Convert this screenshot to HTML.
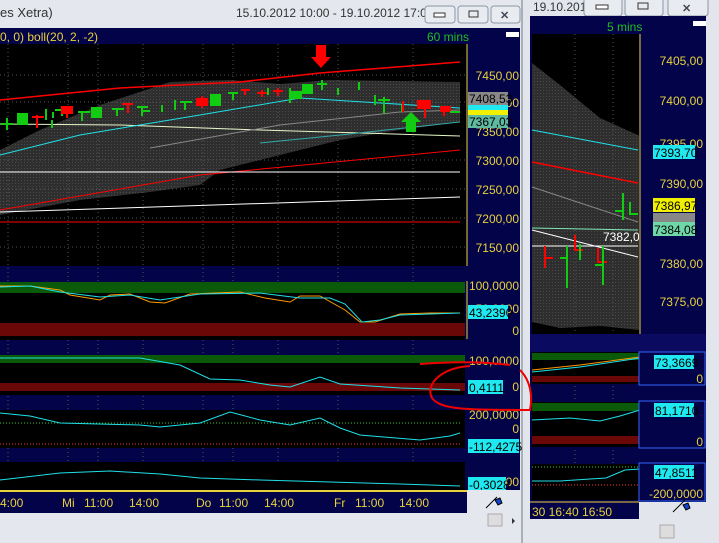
<!DOCTYPE html>
<html><head><meta charset="utf-8"><style>
html,body{margin:0;padding:0;width:719px;height:543px;overflow:hidden;background:#dfe3e8;font-family:"Liberation Sans",sans-serif}
svg{display:block}
text{font-family:"Liberation Sans",sans-serif}
</style></head><body>
<svg width="719" height="543" viewBox="0 0 719 543" xmlns="http://www.w3.org/2000/svg">
<defs>
<pattern id="dots" width="3" height="3" patternUnits="userSpaceOnUse"><rect width="3" height="3" fill="#2e2e2e"/><rect width="1" height="1" fill="#4a4a4a"/></pattern>
</defs>
<!-- right window -->
<rect x="522" y="0" width="197" height="543" fill="#e2e6ec"/>
<text x="533" y="11" font-size="12" fill="#333">19.10.2012 17...</text>
<g fill="#e8ecf0" stroke="#8a96a6"><rect x="584" y="-2" width="38" height="18" rx="3"/><rect x="625" y="-2" width="38" height="18" rx="3"/><rect x="668" y="-2" width="40" height="18" rx="3"/></g>
<rect x="596" y="5" width="12" height="4" fill="#fff" stroke="#333"/>
<rect x="638" y="3" width="10" height="6" fill="none" stroke="#333"/>
<text x="682" y="12" font-size="11" font-weight="bold" fill="#445">✕</text>
<rect x="530" y="16" width="176" height="486" fill="#03034a"/>
<text x="607" y="31" font-size="12" fill="#1fbf1f">5 mins</text>
<rect x="693" y="21" width="13" height="5" fill="#fff"/>
<rect x="532" y="34" width="107" height="300" fill="#000"/>
<path d="M532 63 L560 85 L600 118 L640 136 L640 330 L600 326 L560 328 L532 322 Z" fill="url(#dots)"/>
<g stroke="#555" stroke-dasharray="1,3"><line x1="575" y1="34" x2="575" y2="500"/><line x1="613" y1="34" x2="613" y2="500"/></g>
<line x1="532" y1="130" x2="638" y2="150" stroke="#1fe0e8"/>
<line x1="532" y1="162" x2="638" y2="183" stroke="#f00" stroke-width="1.5"/>
<line x1="532" y1="187" x2="638" y2="222" stroke="#888"/>
<line x1="532" y1="228" x2="638" y2="230" stroke="#7fe8b8"/>
<line x1="532" y1="230" x2="638" y2="257" stroke="#fff"/>
<line x1="532" y1="246" x2="638" y2="246" stroke="#fff"/>
<g stroke="#f00" stroke-width="2" fill="none"><path d="M545 246 V268 M545 258 H553 M575 235 V250 H583 M598 248 V262 H607"/></g>
<g stroke="#1c1" stroke-width="2" fill="none"><path d="M567 246 V288 M560 258 H567 M580 244 V260 M603 246 V285 M595 265 H603 M623 193 V220 M615 211 H623 M630 202 V214 H638"/></g>
<text x="603" y="241" font-size="12" fill="#fff">7382,02</text>
<rect x="639" y="34" width="66" height="300" fill="#03034a"/>
<line x1="640" y1="34" x2="640" y2="334" stroke="#e8d23c"/>
<g font-size="12" fill="#e8d23c" text-anchor="end"><text x="703" y="65">7405,00</text><text x="703" y="105">7400,00</text><text x="703" y="148">7395,00</text><text x="703" y="188">7390,00</text><text x="703" y="268">7380,00</text><text x="703" y="306">7375,00</text></g>
<rect x="653" y="145" width="42" height="14" fill="#1fe8f0"/><text x="654" y="157" font-size="12" fill="#000">7393,70</text>
<rect x="653" y="198" width="42" height="14" fill="#f0f000"/><text x="654" y="210" font-size="12" fill="#000">7386,97</text>
<rect x="653" y="213" width="42" height="10" fill="#888"/>
<rect x="653" y="222" width="42" height="14" fill="#6ed8a8"/><text x="654" y="234" font-size="12" fill="#000">7384,08</text>
<rect x="530" y="334" width="176" height="18" fill="#0a0a60"/>
<rect x="532" y="352" width="107" height="32" fill="#000"/>
<rect x="532" y="353" width="107" height="7" fill="#0a5a0a"/><rect x="532" y="376" width="107" height="6" fill="#6a0808"/>
<path d="M532 370 L580 365 L640 357" stroke="#f90" fill="none"/><path d="M532 372 L580 367 L640 358" stroke="#1fe0e8" fill="none"/>
<rect x="639" y="352" width="66" height="33" fill="#03034a" stroke="#36f"/>
<rect x="654" y="355" width="40" height="14" fill="#1fe8f0"/><text x="655" y="367" font-size="12" fill="#000">73,3669</text>
<text x="703" y="383" font-size="12" fill="#e8d23c" text-anchor="end">0</text>
<rect x="532" y="402" width="107" height="45" fill="#000"/>
<rect x="532" y="403" width="107" height="8" fill="#0a5a0a"/><rect x="532" y="436" width="107" height="8" fill="#6a0808"/>
<path d="M532 420 L570 418 L600 421 L620 416 L640 410" stroke="#1fe0e8" fill="none"/>
<rect x="639" y="401" width="66" height="47" fill="#03034a" stroke="#36f"/>
<rect x="654" y="403" width="40" height="14" fill="#1fe8f0"/><text x="655" y="415" font-size="12" fill="#000">81,1710</text>
<text x="703" y="446" font-size="12" fill="#e8d23c" text-anchor="end">0</text>
<rect x="532" y="464" width="107" height="36" fill="#000"/>
<line x1="532" y1="467" x2="640" y2="467" stroke="#3c3" stroke-dasharray="1,2"/>
<line x1="532" y1="485" x2="640" y2="485" stroke="#f33" stroke-dasharray="1,2"/>
<path d="M532 481 L560 481 L590 479 L606 478 L625 470 L640 469" stroke="#1fe0e8" fill="none"/>
<rect x="639" y="463" width="66" height="38" fill="#03034a" stroke="#36f"/>
<rect x="654" y="465" width="40" height="14" fill="#1fe8f0"/><text x="655" y="477" font-size="12" fill="#000">47,8511</text>
<text x="703" y="498" font-size="12" fill="#e8d23c" text-anchor="end">-200,0000</text>
<rect x="530" y="501" width="109" height="18" fill="#03034a"/><line x1="530" y1="502" x2="639" y2="502" stroke="#e8d23c"/>
<text x="532" y="516" font-size="12" fill="#e8d23c">30  16:40  16:50</text>
<path d="M673 512 L685 500 M683 505 l5 -2 2 5 -4 2z" stroke="#000" fill="#14c"/>
<rect x="660" y="525" width="14" height="13" fill="#ddd" stroke="#aaa"/>

<!-- left window -->
<rect x="0" y="0" width="522" height="543" fill="#e4e8ee"/>
<line x1="522" y1="0" x2="522" y2="543" stroke="#707880"/>
<text x="0" y="17" font-size="13" fill="#333">es Xetra)</text>
<text x="236" y="17" font-size="12" fill="#333">15.10.2012 10:00 - 19.10.2012 17:00</text>
<g fill="#e8ecf0" stroke="#8a96a6"><rect x="425" y="6" width="30" height="17" rx="3"/><rect x="458" y="6" width="30" height="17" rx="3"/><rect x="491" y="6" width="29" height="17" rx="3"/></g>
<rect x="434" y="13" width="11" height="4" fill="#fff" stroke="#333"/>
<rect x="469" y="11" width="9" height="6" fill="none" stroke="#333"/>
<text x="500" y="19" font-size="11" font-weight="bold" fill="#445">✕</text>
<rect x="0" y="28" width="520" height="485" fill="#03034a"/>
<text x="0" y="41" font-size="12" fill="#e8d23c">0, 0) boll(20, 2, -2)</text>
<text x="427" y="41" font-size="12" fill="#1fbf1f">60 mins</text>
<rect x="506" y="32" width="13" height="5" fill="#fff"/>
<!-- main chart -->
<rect x="0" y="44" width="467" height="222" fill="#000"/>
<path d="M0 150 L40 130 L100 105 L170 82 L230 80 L280 84 L330 80 L460 82 L460 122 L400 130 L340 140 L260 160 L220 170 L200 185 L150 192 L80 200 L0 215 Z" fill="url(#dots)"/>
<g stroke="#555" stroke-dasharray="1,3"><line x1="8" y1="44" x2="8" y2="490"/><line x1="68" y1="44" x2="68" y2="490"/><line x1="98" y1="44" x2="98" y2="490"/><line x1="143" y1="44" x2="143" y2="490"/><line x1="203" y1="44" x2="203" y2="490"/><line x1="233" y1="44" x2="233" y2="490"/><line x1="278" y1="44" x2="278" y2="490"/><line x1="338" y1="44" x2="338" y2="490"/><line x1="413" y1="44" x2="413" y2="490"/><line x1="0" y1="75" x2="465" y2="75"/><line x1="0" y1="102" x2="465" y2="102"/><line x1="0" y1="160" x2="465" y2="160"/><line x1="0" y1="189" x2="465" y2="189"/><line x1="0" y1="218" x2="465" y2="218"/><line x1="0" y1="247" x2="465" y2="247"/></g>
<path d="M0 100 L120 88 L240 82 L320 73 L460 62" stroke="#f00" stroke-width="1.5" fill="none"/>
<path d="M0 210 L200 175 L460 150" stroke="#f00" fill="none"/>
<line x1="0" y1="222" x2="460" y2="222" stroke="#f00"/>
<path d="M0 124 L120 125 L260 130 L460 136" stroke="#e8f8c8" fill="none"/>
<line x1="0" y1="172" x2="460" y2="172" stroke="#fff"/>
<path d="M0 212 L460 197" stroke="#fff" fill="none"/>
<path d="M0 155 L80 135 L200 115 L300 98 L460 108" stroke="#1fe0e8" fill="none"/>
<path d="M150 148 L280 125 L400 112 L460 110" stroke="#888" fill="none"/>
<path d="M260 143 L340 135 L460 122" stroke="#3aa" fill="none"/>
<g stroke="#1c1" stroke-width="2" fill="#1c1"><path d="M7 118 V130 M1 124 H13 M52 120 V128 M162 105 V112 M142 111 H150 M175 100 V110 M233 93 V100 M228 93 H238 M268 88 V95 M290 88 V103 M322 80 V90 M317 84 H327 M338 88 V95 M359 82 V90 M375 95 V105 M384 97 V113 M378 100 H390 M402 105 V112"/><rect x="18" y="114" width="9" height="10"/><rect x="92" y="108" width="9" height="9"/><rect x="211" y="95" width="9" height="10"/><rect x="303" y="85" width="9" height="8"/><rect x="292" y="92" width="9" height="6"/><path d="M46 109 V120 M53 112 V118 M55 110 H70 M62 108 V116 M82 111 V121 M78 112 H90 M117 109 V116 M112 109 H124 M142 106 V116 M137 107 H148 M185 101 V110 M180 102 H192"/></g>
<g stroke="#f00" stroke-width="2" fill="#f00"><path d="M37 115 V128 M32 117 H44 M67 106 V118 M63 111 H72 M128 104 V113 M122 104 H133 M202 96 V108 M245 90 V95 M241 90 H250 M262 90 V97 M257 93 H267 M278 88 V96 M273 91 H283 M403 101 V112 M425 100 V118 M444 106 V116"/><rect x="62" y="107" width="10" height="6"/><rect x="197" y="99" width="10" height="6"/><rect x="418" y="101" width="12" height="7"/><rect x="441" y="107" width="9" height="4"/></g>
<path d="M316 45 h10 v12 h5 l-10 11 -10 -11 h5z" fill="#f00"/>
<path d="M406 132 v-10 h-5 l10 -10 10 10 h-5 v10z" fill="#1c1"/>
<path d="M450 112 H460" stroke="#1c1" stroke-width="2"/>
<!-- main axis -->
<line x1="467" y1="44" x2="467" y2="266" stroke="#e8d23c"/>
<g font-size="12" fill="#e8d23c" text-anchor="end"><text x="519" y="80">7450,00</text><text x="519" y="107">7400,00</text><text x="519" y="136">7350,00</text><text x="519" y="165">7300,00</text><text x="519" y="194">7250,00</text><text x="519" y="223">7200,00</text><text x="519" y="252">7150,00</text></g>
<rect x="468" y="92" width="40" height="13" fill="#888"/><text x="469" y="103" font-size="12" fill="#000">7408,53</text>
<rect x="468" y="105" width="40" height="5" fill="#1fe8f0"/><rect x="468" y="110" width="40" height="5" fill="#f0f000"/>
<rect x="468" y="115" width="40" height="13" fill="#5fb8a0"/><text x="469" y="126" font-size="12" fill="#000">7367,03</text>
<!-- panel 2 -->
<rect x="0" y="282" width="465" height="58" fill="#000"/>
<rect x="0" y="282" width="465" height="11" fill="#0a5a0a"/><rect x="0" y="323" width="465" height="13" fill="#6a0808"/>
<path d="M0 286 L30 286 L60 290 L70 295 L100 300 L110 295 L130 294 L150 302 L165 303 L190 294 L240 292 L265 298 L290 302 L300 296 L320 296 L345 310 L360 322 L375 322 L400 314 L430 313 L460 313" stroke="#f90" fill="none"/>
<path d="M0 287 L30 286 L60 292 L100 297 L130 295 L160 300 L200 294 L260 293 L300 298 L330 298 L345 304 L362 322 L380 320 L400 315 L460 313" stroke="#1fe0e8" fill="none"/>
<rect x="467" y="281" width="53" height="58" fill="#03034a"/><line x1="467" y1="281" x2="467" y2="339" stroke="#e8d23c"/>
<g font-size="12" fill="#e8d23c" text-anchor="end"><text x="519" y="290">100,0000</text><text x="519" y="313">50,0000</text><text x="519" y="335">0</text></g>
<rect x="468" y="305" width="40" height="14" fill="#1fe8f0"/><text x="469" y="317" font-size="12" fill="#000">43,2390</text>
<!-- panel 3 -->
<rect x="0" y="355" width="465" height="40" fill="#000"/>
<rect x="0" y="355" width="465" height="8" fill="#0a5a0a"/><rect x="0" y="383" width="465" height="8" fill="#6a0808"/>
<path d="M0 358 L140 358 L180 365 L210 379 L240 380 L270 385 L290 387 L320 377 L340 384 L400 388 L460 390" stroke="#1fe0e8" fill="none"/>
<rect x="467" y="355" width="53" height="40" fill="#03034a"/>
<g font-size="12" fill="#e8d23c" text-anchor="end"><text x="519" y="365">100,0000</text><text x="519" y="391">0</text></g>
<rect x="468" y="380" width="35" height="14" fill="#1fe8f0"/><text x="469" y="392" font-size="12" fill="#000">0,4111</text>
<!-- panel 4 -->
<rect x="0" y="410" width="465" height="38" fill="#000"/>
<line x1="0" y1="423" x2="460" y2="423" stroke="#3c3" stroke-dasharray="1,2"/>
<line x1="0" y1="444" x2="460" y2="444" stroke="#f33" stroke-dasharray="1,2"/>
<path d="M0 413 L30 416 L60 423 L140 425 L160 427 L200 423 L230 412 L260 420 L290 425 L320 418 L340 428 L360 435 L420 440 L450 436 L460 433" stroke="#1fe0e8" fill="none"/>
<rect x="467" y="410" width="53" height="39" fill="#03034a"/>
<g font-size="12" fill="#e8d23c" text-anchor="end"><text x="519" y="419">200,0000</text><text x="519" y="433">0</text></g>
<rect x="468" y="439" width="51" height="14" fill="#1fe8f0"/><text x="469" y="451" font-size="12" fill="#000">-112,4275</text>
<!-- panel 5 -->
<rect x="0" y="462" width="465" height="28" fill="#000"/>
<path d="M0 480 L60 473 L110 471 L160 474 L200 478 L260 480 L330 482 L400 484 L460 486" stroke="#1fe0e8" fill="none"/>
<rect x="467" y="462" width="53" height="28" fill="#03034a"/>
<text x="519" y="486" font-size="12" fill="#e8d23c" text-anchor="end">-1,0000</text>
<rect x="468" y="477" width="38" height="14" fill="#1fe8f0"/><text x="469" y="489" font-size="12" fill="#000">-0,3028</text>
<!-- time axis -->
<rect x="0" y="490" width="467" height="23" fill="#03034a"/>
<line x1="0" y1="491" x2="467" y2="491" stroke="#e8d23c" stroke-width="2"/>
<g font-size="12" fill="#e8d23c"><text x="0" y="507">4:00</text><text x="62" y="507">Mi</text><text x="84" y="507">11:00</text><text x="129" y="507">14:00</text><text x="196" y="507">Do</text><text x="219" y="507">11:00</text><text x="264" y="507">14:00</text><text x="334" y="507">Fr</text><text x="355" y="507">11:00</text><text x="399" y="507">14:00</text></g>
<rect x="467" y="490" width="53" height="23" fill="#e4e8ee"/>
<path d="M486 508 L497 497 M495 500 l5 -2 2 5 -4 2z" stroke="#000" fill="#14c"/>
<rect x="488" y="514" width="14" height="12" fill="#ddd" stroke="#aaa"/>
<path d="M512 518 l3 3 -3 3z" fill="#333"/>
<!-- red annotation -->
<path d="M420 364 Q470 360 510 365 M470 366 C440 368 425 385 432 398 C440 410 470 410 530 410 C533 395 530 380 520 370" stroke="#e00" stroke-width="2" fill="none"/>
</svg>
</body></html>
